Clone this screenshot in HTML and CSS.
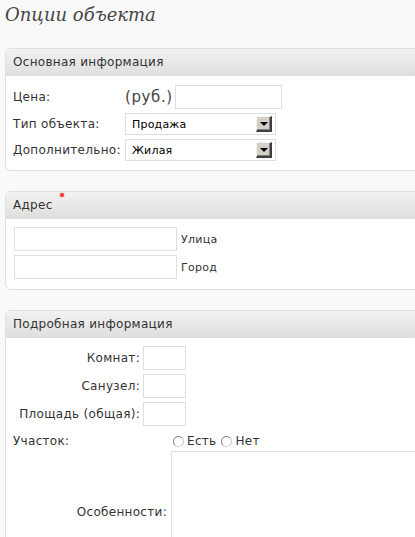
FILE: index.html
```html
<!DOCTYPE html>
<html lang="ru">
<head>
<meta charset="utf-8">
<title>Опции объекта</title>
<link rel="stylesheet" href="styles.css">
</head>
<body>
<div class="wrap">
  <h2 class="title">Опции объекта</h2>

  <div class="postbox">
    <h3 class="hndle">Основная информация</h3>
    <div class="inside main-grid">
      <span class="lbl">Цена:</span>
      <span class="price"><span class="cur">(руб.)</span><input class="txt price-input" type="text"></span>
      <span class="lbl">Тип объекта:</span>
      <span class="select"><span class="sel-text">Продажа</span><span class="sel-btn"><span class="tri"></span></span></span>
      <span class="lbl">Дополнительно:</span>
      <span class="select"><span class="sel-text">Жилая</span><span class="sel-btn"><span class="tri"></span></span></span>
    </div>
  </div>

  <div class="postbox">
    <h3 class="hndle">Адрес<span class="req"></span></h3>
    <div class="inside addr">
      <div class="addr-row"><input class="txt addr-input" type="text"><span class="small">Улица</span></div>
      <div class="addr-row"><input class="txt addr-input" type="text"><span class="small">Город</span></div>
    </div>
  </div>

  <div class="postbox">
    <h3 class="hndle">Подробная информация</h3>
    <div class="inside details">
      <div class="grid-a">
        <span class="lbl r">Комнат:</span><input class="txt num" type="text">
        <span class="lbl r">Санузел:</span><input class="txt num" type="text">
        <span class="lbl r">Площадь (общая):</span><input class="txt num" type="text">
      </div>
      <div class="grid-b">
        <span class="lbl">Участок:</span>
        <span class="radios"><span class="radio"></span><span class="rl">Есть</span><span class="radio"></span><span class="rl">Нет</span></span>
        <span class="lbl r mid">Особенности:</span>
        <textarea class="area"></textarea>
      </div>
    </div>
  </div>
</div>
</body>
</html>
```
FILE: styles.css
```css
html, body {
  margin: 0;
  padding: 0;
  overflow: hidden;
  background: #f9f9f9;
}
body {
  font-family: "DejaVu Sans", Verdana, sans-serif;
  font-size: 12px;
  letter-spacing: 0.3px;
  color: #333;
}
.wrap {
  width: 450px;
  padding: 0 0 0 5px;
}
.title {
  margin: 0;
  padding: 4px 0 0 0;
  height: 48px;
  box-sizing: border-box;
  font-family: "DejaVu Serif", Georgia, serif;
  font-style: italic;
  font-weight: normal;
  font-size: 18px;
  letter-spacing: 0;
  line-height: 22px;
  color: #464646;
}
.postbox {
  border: 1px solid #dfdfdf;
  border-radius: 6px;
  background: #fff;
  margin-bottom: 20px;
}
.hndle {
  position: relative;
  margin: 0;
  height: 27px;
  line-height: 27px;
  padding-left: 7px;
  font-size: 12px;
  font-weight: normal;
  color: #333;
  border-radius: 6px 6px 0 0;
  background: linear-gradient(#f2f2f2, #dedede);
}
.req {
  position: absolute;
  left: 54px;
  top: 1px;
  width: 4px;
  height: 4px;
  border-radius: 50%;
  background: #f33;
  box-shadow: 0 0 2px #f66;
}
.txt {
  display: block;
  box-sizing: border-box;
  margin: 0;
  padding: 0 3px;
  border: 1px solid #dfdfdf;
  background: #fff;
  height: 24px;
  font: inherit;
}
.main-grid {
  display: grid;
  grid-template-columns: 112px auto;
  row-gap: 4px;
  align-items: center;
  justify-items: start;
  padding: 9px 7px 9px 7px;
}
.price {
  display: flex;
  align-items: center;
  gap: 2px;
}
.cur {
  font-size: 15px;
  letter-spacing: 0.6px;
  color: #444;
}
.price-input {
  width: 107px;
}
.select {
  display: flex;
  align-items: center;
  justify-content: space-between;
  box-sizing: border-box;
  width: 151px;
  height: 22px;
  border: 1px solid #dfdfdf;
  background: #fff;
  padding: 0 3px 0 6px;
}
.sel-text {
  font-size: 11px;
  letter-spacing: 0.2px;
  color: #000;
}
.sel-btn {
  box-sizing: border-box;
  width: 16px;
  height: 16px;
  background: #d4d0c8;
  border-style: solid;
  border-width: 1px 2px 2px 1px;
  border-color: #f4f3ee #404040 #404040 #f4f3ee;
  box-shadow: inset -1px -1px 0 #808080;
  display: flex;
  align-items: center;
  justify-content: center;
}
.tri {
  width: 0;
  height: 0;
  border-left: 4px solid transparent;
  border-right: 4px solid transparent;
  border-top: 4px solid #000;
  margin-top: 1px;
}
.addr {
  padding: 8px 8px 10px 8px;
  display: flex;
  flex-direction: column;
  gap: 4px;
}
.addr-row {
  display: flex;
  align-items: center;
  gap: 4px;
}
.addr-input {
  width: 163px;
}
.small {
  font-size: 11px;
  color: #333;
}
.details {
  padding: 8px 0 0 7px;
}
.grid-a {
  display: grid;
  grid-template-columns: 127px 43px;
  column-gap: 3px;
  row-gap: 4px;
  align-items: center;
}
.r {
  text-align: right;
}
.num {
  width: 43px;
}
.grid-b {
  display: grid;
  grid-template-columns: 154px 260px;
  column-gap: 4px;
  row-gap: 2px;
  margin-top: 7px;
  align-items: center;
}
.radios {
  display: flex;
  align-items: center;
  height: 16px;
  margin-left: 2px;
}
.radio {
  box-sizing: border-box;
  width: 11px;
  height: 11px;
  border-radius: 50%;
  border: 1px solid;
  border-color: #7a7a7a #c8c8c8 #d8d8d8 #8a8a8a;
  background: #fff;
  margin-right: 3px;
}
.rl {
  margin-right: 5px;
}
.area {
  display: block;
  box-sizing: border-box;
  width: 260px;
  height: 122px;
  margin: 0;
  border: 1px solid #dfdfdf;
  resize: none;
  font: inherit;
}
```
